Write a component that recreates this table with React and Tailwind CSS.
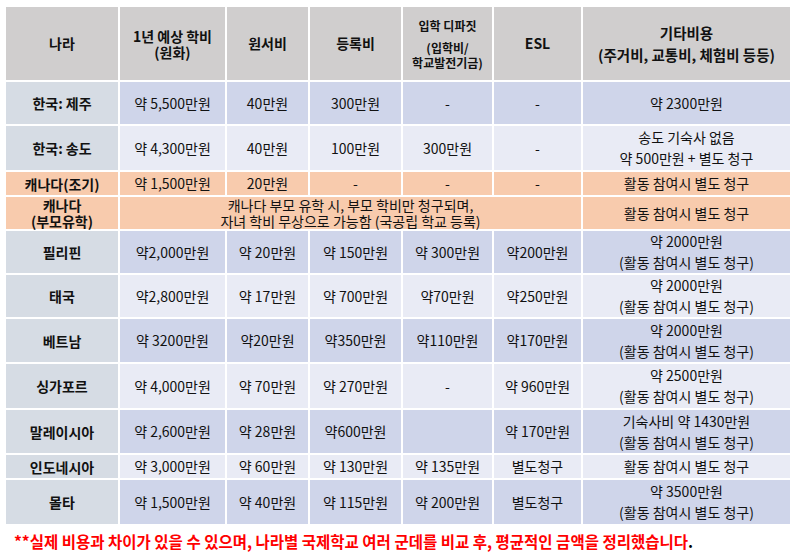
const font = { fontFamily: '"Noto Sans CJK KR", "Noto Sans", sans-serif' };

const rows = [
  { name: '한국: 제주', tone: 'dark', cells: ['약 5,500만원', '40만원', '300만원', '-', '-'], etc: ['약 2300만원'] },
  { name: '한국: 송도', tone: 'light', cells: ['약 4,300만원', '40만원', '100만원', '300만원', '-'], etc: ['송도 기숙사 없음', '약 500만원 + 별도 청구'] },
  { name: '캐나다(조기)', tone: 'orange', cells: ['약 1,500만원', '20만원', '-', '-', '-'], etc: ['활동 참여시 별도 청구'] },
  { name: ['캐나다', '(부모유학)'], tone: 'orange', span: ['캐나다 부모 유학 시, 부모 학비만 청구되며,', '자녀 학비 무상으로 가능함 (국공립 학교 등록)'], etc: ['활동 참여시 별도 청구'] },
  { name: '필리핀', tone: 'dark', cells: ['약2,000만원', '약 20만원', '약 150만원', '약 300만원', '약200만원'], etc: ['약 2000만원', '(활동 참여시 별도 청구)'] },
  { name: '태국', tone: 'light', cells: ['약2,800만원', '약 17만원', '약 700만원', '약70만원', '약250만원'], etc: ['약 2000만원', '(활동 참여시 별도 청구)'] },
  { name: '베트남', tone: 'dark', cells: ['약 3200만원', '약20만원', '약350만원', '약110만원', '약170만원'], etc: ['약 2000만원', '(활동 참여시 별도 청구)'] },
  { name: '싱가포르', tone: 'light', cells: ['약 4,000만원', '약 70만원', '약 270만원', '-', '약 960만원'], etc: ['약 2500만원', '(활동 참여시 별도 청구)'] },
  { name: '말레이시아', tone: 'dark', cells: ['약 2,600만원', '약 28만원', '약600만원', '', '약 170만원'], etc: ['기숙사비 약 1430만원', '(활동 참여시 별도 청구)'] },
  { name: '인도네시아', tone: 'light', cells: ['약 3,000만원', '약 60만원', '약 130만원', '약 135만원', '별도청구'], etc: ['활동 참여시 별도 청구'] },
  { name: '몰타', tone: 'dark', cells: ['약 1,500만원', '약 40만원', '약 115만원', '약 200만원', '별도청구'], etc: ['약 3500만원', '(활동 참여시 별도 청구)'] },
];

const toneBg = { dark: 'bg-[#cfd5ea]', light: 'bg-[#e9ebf5]', orange: 'bg-[#f8cbad]' };

function Cell({ className = '', children }) {
  return (
    <div className={`flex flex-col items-center justify-center text-center min-h-0 ${className}`}>
      {children}
    </div>
  );
}

export default function App() {
  return (
    <div className="w-[800px] h-[554px] bg-white pt-[7px] pl-[6px] text-[14px] text-[#111] overflow-hidden" style={font}>
      <div className="grid grid-cols-[112px_105px_81px_91px_89px_87px_207px] grid-rows-[73px_42px_44px_23px_32px_42px_42px_43px_44px_43px_23px_44px] gap-[2px] w-[784px]">
        {/* header */}
        <Cell className="bg-[#d0cece] font-bold">나라</Cell>
        <Cell className="bg-[#d0cece] font-bold leading-[16px]">
          <span>1년 예상 학비</span>
          <span>(원화)</span>
        </Cell>
        <Cell className="bg-[#d0cece] font-bold">원서비</Cell>
        <Cell className="bg-[#d0cece] font-bold">등록비</Cell>
        <Cell className="bg-[#d0cece] font-bold text-[12px] leading-[15px]">
          <span className="mb-[7px]">입학 디파짓</span>
          <span>(입학비/</span>
          <span>학교발전기금)</span>
        </Cell>
        <Cell className="bg-[#d0cece] font-bold">ESL</Cell>
        <Cell className="bg-[#d0cece] font-bold text-[14.5px] leading-[22px]">
          <span>기타비용</span>
          <span>(주거비, 교통비, 체험비 등등)</span>
        </Cell>

        {rows.map((r, i) => {
          const bg = toneBg[r.tone];
          const nameBg = r.tone === 'orange' ? bg : 'bg-[#d6dce4]';
          return [
            <Cell key={`n${i}`} className={`${nameBg} font-bold leading-[16px]`}>
              {Array.isArray(r.name) ? r.name.map((t) => <span key={t}>{t}</span>) : r.name}
            </Cell>,
            r.span ? (
              <Cell key={`s${i}`} className={`${bg} col-span-5 leading-[16px]`}>
                {r.span.map((t) => <span key={t}>{t}</span>)}
              </Cell>
            ) : (
              r.cells.map((c, j) => (
                <Cell key={`c${i}-${j}`} className={bg}>{c}</Cell>
              ))
            ),
            <Cell key={`e${i}`} className={`${bg} leading-[21px]`}>
              {r.etc.map((t) => <span key={t}>{t}</span>)}
            </Cell>,
          ];
        })}
      </div>
      <p className="mt-[6px] pl-[8px] font-bold text-[15.5px] leading-[22px] text-[#ff0000] whitespace-nowrap">
        **실제 비용과 차이가 있을 수 있으며, 나라별 국제학교 여러 군데를 비교 후, 평균적인 금액을 정리했습니다<span className="text-black">.</span>
      </p>
    </div>
  );
}
